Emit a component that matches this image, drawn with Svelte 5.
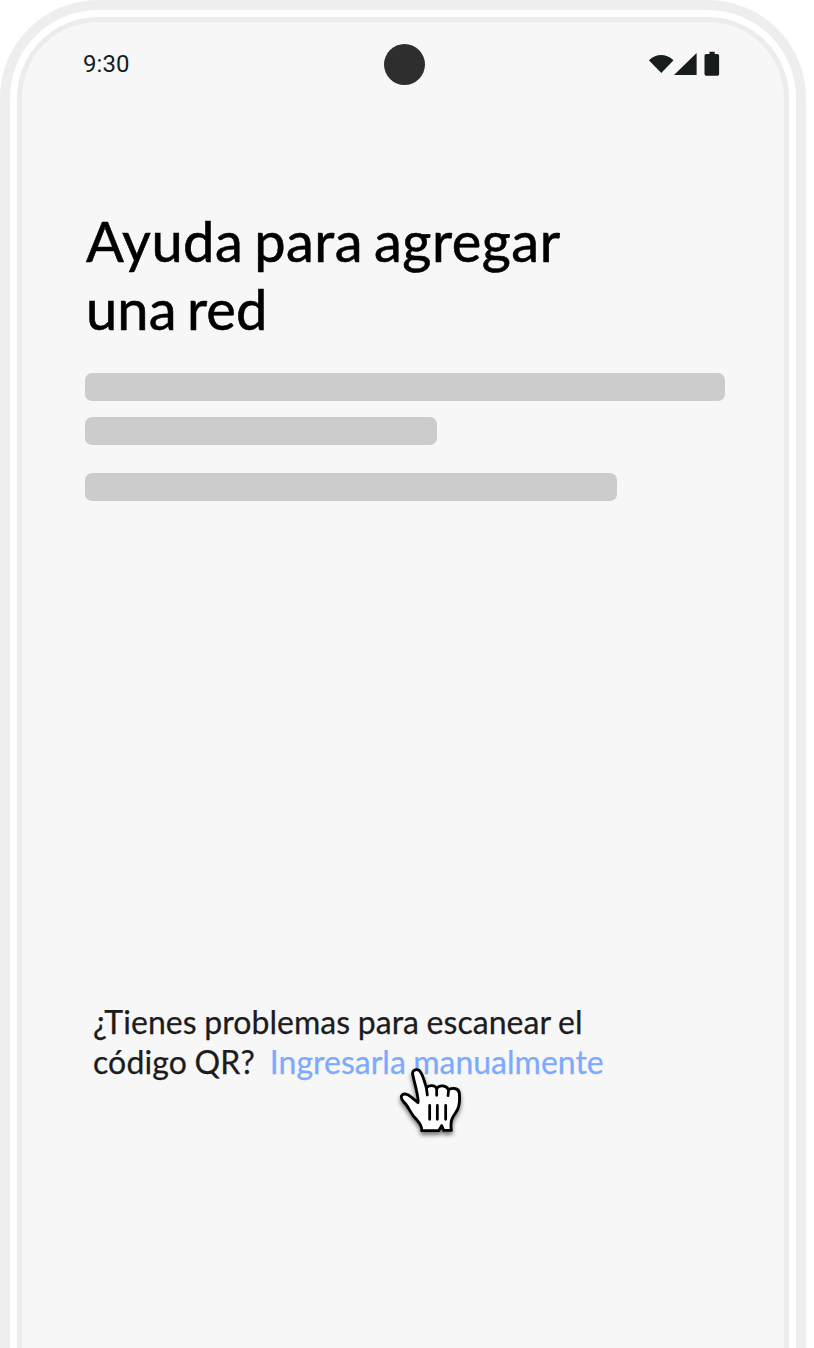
<script>
  const titleLines = ['Ayuda para agregar', 'una red'];
  const placeholders = [
    { width: 640, gap: 16 },
    { width: 352, gap: 28 },
    { width: 532, gap: 0 }
  ];
</script>

<div class="phone">
  <main class="screen">
    <header class="status">
      <span class="time">9:30</span>
      <span class="camera"></span>
      <svg class="signals" width="72" height="26" viewBox="0 0 72 26" fill="#171d1b" aria-hidden="true">
        <path d="M.9 9.2Q13.1-1 25.5 9.2L13.3 22Z" />
        <path d="M26 24.1 48.6 1.9V24.1Z" />
        <path d="M61.5 .8h5.2v2.2h2.4q2 0 2 1.6v18.4q0 1.8-1.6 1.8h-11.4q-1.6 0-1.6-1.8V4.6q0-1.6 2-1.6h3Z" />
      </svg>
    </header>

    <h1>
      {#each titleLines as line}
        <span>{line}</span>
      {/each}
    </h1>

    <section class="skeleton" aria-hidden="true">
      {#each placeholders as bar}
        <div class="bar" style="width: {bar.width}px; margin-bottom: {bar.gap}px"></div>
      {/each}
    </section>

    <footer>
      <div class="row"><span>¿Tienes problemas para escanear el</span></div>
      <div class="row second-row">
        <span class="code">código QR?</span>
        <span class="link">
          <span class="label">Ingresarla manualmente</span>
          <svg class="hand" width="70" height="78" viewBox="0 0 210 234" aria-hidden="true">
            <path
              d="M50 37C48 25 59 20 69 25C78 30 86 60 91 77C99 68 116 69 122 79C131 68 150 69 158 83C171 76 189 79 190 94C192 117 190 136 181 149C169 166 162 174 166 205H143L137 191L128 206H77C79 193 72 184 62 173C45 158 41 141 29 126C21 116 12 111 17 101C22 92 36 96 44 104L66 122C70 110 53 54 50 37Z"
              fill="#fff" stroke="#000" stroke-width="8.6" stroke-linejoin="round"
            />
            <path
              d="M91 77L94 99M122 79V100M158 83L156 101M101 130V172M124 130V172M149 130V172"
              fill="none" stroke="#000" stroke-width="8.3" stroke-linecap="round"
            />
          </svg>
        </span>
      </div>
    </footer>
  </main>
</div>

<style>
  :global(body) {
    background: #fff;
    overflow: hidden;
  }
  .phone {
    box-sizing: border-box;
    width: 806px;
    height: 1348px;
    padding: 7px 7px 0;
    border: 10px solid #eee;
    border-bottom: 0;
    border-radius: 98px 98px 0 0;
    background: #fff;
  }
  .screen {
    box-sizing: border-box;
    height: 1331px;
    border: 5px solid #ececec;
    border-bottom: 0;
    border-radius: 81px 81px 0 0;
    background: #f7f7f7;
    display: flex;
    flex-direction: column;
    font-family: Lato, sans-serif;
  }
  .status {
    display: grid;
    grid-template-columns: 301px 41px 1fr;
    align-items: center;
    height: 42px;
    margin: 21px 64px 0 61px;
    flex: none;
  }
  .time {
    font: 400 24px/28px Roboto, sans-serif;
    color: #171d1b;
    letter-spacing: 0.1px;
  }
  .camera {
    width: 41px;
    height: 41px;
    border-radius: 50%;
    background: #2e2e2e;
  }
  .signals {
    justify-self: end;
  }
  h1 {
    margin: 122px 0 0 64px;
    font-size: 56px;
    font-weight: 400;
    line-height: 68px;
    letter-spacing: 0.5px;
    word-spacing: -4px;
    color: #000;
    -webkit-text-stroke: 0.6px #000;
  }
  h1 span {
    display: block;
    width: max-content;
    white-space: nowrap;
  }
  h1 span + span {
    letter-spacing: 0.1px;
  }
  .skeleton {
    margin: 30px 0 0 63px;
  }
  .bar {
    height: 28px;
    border-radius: 7px;
    background: #ccc;
  }
  footer {
    margin: 501px 0 0 71px;
    font-size: 32px;
    line-height: 40px;
    letter-spacing: 0.06px;
    word-spacing: -0.8px;
    color: #1c1c1c;
    -webkit-text-stroke: 0.25px currentColor;
  }
  .row {
    display: flex;
    white-space: nowrap;
  }
  .second-row {
    gap: 15px;
  }
  .code {
    letter-spacing: 0.12px;
  }
  .link {
    position: relative;
    color: #7baaff;
    letter-spacing: 0;
  }
  .hand {
    position: absolute;
    left: 126px;
    top: 20px;
    overflow: visible;
    filter: drop-shadow(0 3px 2px #0008);
  }
</style>
